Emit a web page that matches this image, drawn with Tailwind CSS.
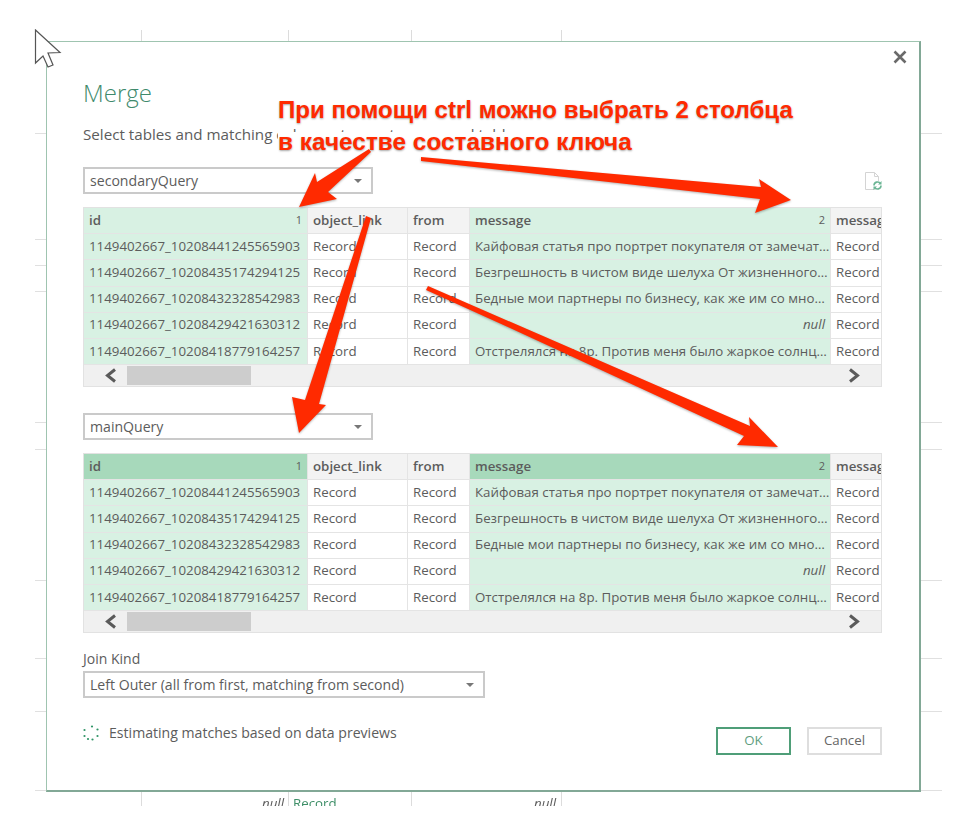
<!DOCTYPE html>
<html lang="en">

<head>
    <meta charset="UTF-8">
    <title>Merge</title>
    <script src="https://cdn.jsdelivr.net/npm/@tailwindcss/browser@4"></script>
</head>

<body class="bg-white font-['Open_Sans',sans-serif] text-[#5c5c5c]">
    <div class="relative w-[968px] h-[836px] overflow-hidden blur-[0.5px]">

        <!-- Sheet behind the dialog -->
        <div class="absolute left-[35px] top-[30px] w-[907px] h-[776px] overflow-hidden">
            <div class="absolute left-[106px] top-0 w-px h-full bg-[#dcdcdc]"></div>
            <div class="absolute left-[253px] top-0 w-px h-full bg-[#dcdcdc]"></div>
            <div class="absolute left-[376px] top-0 w-px h-full bg-[#dcdcdc]"></div>
            <div class="absolute left-[526px] top-0 w-px h-full bg-[#dcdcdc]"></div>
            <div class="absolute left-0 top-[103px] w-full h-px bg-[#e0e0e0]"></div>
            <div class="absolute left-0 top-[209px] w-full h-px bg-[#e0e0e0]"></div>
            <div class="absolute left-0 top-[235px] w-full h-px bg-[#e0e0e0]"></div>
            <div class="absolute left-0 top-[261px] w-full h-px bg-[#e0e0e0]"></div>
            <div class="absolute left-0 top-[392px] w-full h-px bg-[#e0e0e0]"></div>
            <div class="absolute left-0 top-[419px] w-full h-px bg-[#e0e0e0]"></div>
            <div class="absolute left-0 top-[550px] w-full h-px bg-[#e0e0e0]"></div>
            <div class="absolute left-0 top-[628px] w-full h-px bg-[#e0e0e0]"></div>
            <div class="absolute left-0 top-[681px] w-full h-px bg-[#e0e0e0]"></div>
            <div class="absolute left-0 top-[760px] w-full h-px bg-[#e0e0e0]"></div>
            <span class="absolute left-[227px] top-[764px] text-[13.3px] italic">null</span>
            <span class="absolute left-[258px] top-[764px] text-[13.3px] text-[#3f8f68]">Record</span>
            <span class="absolute left-[499px] top-[764px] text-[13.3px] italic">null</span>
        </div>

        <!-- Merge dialog -->
        <div class="relative ml-[46px] mt-[41px] w-[875px] h-[751px] bg-white border border-[#9fc4b0] border-r-2 border-b-2 border-r-[#82a896] border-b-[#82a896] pl-[36px] pr-[37px]">
            <button class="absolute right-[12px] top-[8px]">
                <svg width="14" height="14" viewBox="0 0 14 14" fill="none" stroke="#6a6a6a" stroke-width="2.6">
                    <path d="M1.5 1.5 12.5 12.5M12.5 1.5 1.5 12.5" />
                </svg>
            </button>

            <h1 class="pt-[33px] h-[72px] text-[24px] leading-[36px] font-light text-[#3f8a6c]">Merge</h1>
            <p class="mt-[10px] h-[20px] text-[15.2px] leading-[20px]">Select tables and matching columns to create a merged table</p>

            <div class="mt-[23px] flex items-end justify-between h-[27px]">
                <div class="w-[290px] h-[27px] border-2 border-[#cacaca] flex items-center justify-between pl-[5px] pr-[9px] text-[14.1px]">
                    <span>secondaryQuery</span>
                    <span class="w-0 h-0 border-x-[4px] border-x-transparent border-t-[4px] border-t-[#777]"></span>
                </div>
                <svg class="mb-[4px]" width="17" height="19" viewBox="0 0 17 19" fill="none">
                    <path d="M.5 1.500H9.500L13.500 5.500V18.500H.5Z" stroke="#d4d4d4" />
                    <path d="M9.500 1.500V5.500H13.500" stroke="#d4d4d4" />
                    <circle cx="12.500" cy="14.500" r="4.500" fill="#fff" />
                    <path d="M9 14.500A3.500 3.500 0 0 1 15.500 12.700M16 14.500A3.500 3.500 0 0 1 9.500 16.300" stroke="#6bb594" stroke-width="1.600" />
                    <path d="M16.500 10V13.500H13ZM8.500 19V15.500H12Z" fill="#6bb594" />
                </svg>
            </div>

            <!-- Upper preview table -->
            <div class="mt-[13px] w-[799px] h-[180px] border border-[#e2e2e2] bg-[#e4e4e4] text-[13.3px]">
                <div class="grid grid-cols-[223px_99px_61px_360px_50px] grid-rows-[25px_repeat(5,25.25px)] gap-px *:flex *:items-center *:px-[5px] *:whitespace-nowrap *:overflow-hidden">
                    <div class="bg-[#d8f1e3] font-semibold justify-between"><span>id</span><span class="text-[11px] font-normal">1</span></div>
                    <div class="bg-[#f3f3f3] font-semibold">object_link</div>
                    <div class="bg-[#f3f3f3] font-semibold">from</div>
                    <div class="bg-[#d8f1e3] font-semibold justify-between"><span>message</span><span class="text-[11px] font-normal">2</span></div>
                    <div class="bg-[#f3f3f3] font-semibold">messag</div>

                    <div class="bg-[#d8f1e3]">1149402667_10208441245565903</div>
                    <div class="bg-white">Record</div>
                    <div class="bg-white">Record</div>
                    <div class="bg-[#d8f1e3]">Кайфовая статья про портрет покупателя от замечат…</div>
                    <div class="bg-white">Record</div>

                    <div class="bg-[#d8f1e3]">1149402667_10208435174294125</div>
                    <div class="bg-white">Record</div>
                    <div class="bg-white">Record</div>
                    <div class="bg-[#d8f1e3]">Безгрешность в чистом виде шелуха От жизненного…</div>
                    <div class="bg-white">Record</div>

                    <div class="bg-[#d8f1e3]">1149402667_10208432328542983</div>
                    <div class="bg-white">Record</div>
                    <div class="bg-white">Record</div>
                    <div class="bg-[#d8f1e3]">Бедные мои партнеры по бизнесу, как же им со мно…</div>
                    <div class="bg-white">Record</div>

                    <div class="bg-[#d8f1e3]">1149402667_10208429421630312</div>
                    <div class="bg-white">Record</div>
                    <div class="bg-white">Record</div>
                    <div class="bg-[#d8f1e3] justify-end italic">null</div>
                    <div class="bg-white">Record</div>

                    <div class="bg-[#d8f1e3]">1149402667_10208418779164257</div>
                    <div class="bg-white">Record</div>
                    <div class="bg-white">Record</div>
                    <div class="bg-[#d8f1e3]">Отстрелялся на 8р. Против меня было жаркое солнц…</div>
                    <div class="bg-white">Record</div>
                </div>
                <div class="mt-px h-[21px] bg-[#f0f0f0] flex items-center pl-[20px] pr-[20px]">
                    <svg width="13" height="15" viewBox="0 0 13 15" fill="none" stroke="#5a5a5a" stroke-width="3"><path d="M11 1.500 3.500 7.500l7.500 6" /></svg>
                    <div class="ml-[10px] w-[124px] h-[19px] bg-[#cdcdcd]"></div>
                    <svg class="ml-auto" width="13" height="15" viewBox="0 0 13 15" fill="none" stroke="#5a5a5a" stroke-width="3"><path d="M2 1.500l7.500 6-7.500 6" /></svg>
                </div>
            </div>

            <div class="mt-[26px] w-[290px] h-[27px] border-2 border-[#cacaca] flex items-center justify-between pl-[5px] pr-[9px] text-[14.1px]">
                <span>mainQuery</span>
                <span class="w-0 h-0 border-x-[4px] border-x-transparent border-t-[4px] border-t-[#777]"></span>
            </div>

            <!-- Lower preview table -->
            <div class="mt-[13px] w-[799px] h-[180px] border border-[#e2e2e2] bg-[#e4e4e4] text-[13.3px]">
                <div class="grid grid-cols-[223px_99px_61px_360px_50px] grid-rows-[25px_repeat(5,25.25px)] gap-px *:flex *:items-center *:px-[5px] *:whitespace-nowrap *:overflow-hidden">
                    <div class="bg-[#a7d9bb] font-semibold justify-between"><span>id</span><span class="text-[11px] font-normal">1</span></div>
                    <div class="bg-[#f3f3f3] font-semibold">object_link</div>
                    <div class="bg-[#f3f3f3] font-semibold">from</div>
                    <div class="bg-[#a7d9bb] font-semibold justify-between"><span>message</span><span class="text-[11px] font-normal">2</span></div>
                    <div class="bg-[#f3f3f3] font-semibold">messag</div>

                    <div class="bg-[#d8f1e3]">1149402667_10208441245565903</div>
                    <div class="bg-white">Record</div>
                    <div class="bg-white">Record</div>
                    <div class="bg-[#d8f1e3]">Кайфовая статья про портрет покупателя от замечат…</div>
                    <div class="bg-white">Record</div>

                    <div class="bg-[#d8f1e3]">1149402667_10208435174294125</div>
                    <div class="bg-white">Record</div>
                    <div class="bg-white">Record</div>
                    <div class="bg-[#d8f1e3]">Безгрешность в чистом виде шелуха От жизненного…</div>
                    <div class="bg-white">Record</div>

                    <div class="bg-[#d8f1e3]">1149402667_10208432328542983</div>
                    <div class="bg-white">Record</div>
                    <div class="bg-white">Record</div>
                    <div class="bg-[#d8f1e3]">Бедные мои партнеры по бизнесу, как же им со мно…</div>
                    <div class="bg-white">Record</div>

                    <div class="bg-[#d8f1e3]">1149402667_10208429421630312</div>
                    <div class="bg-white">Record</div>
                    <div class="bg-white">Record</div>
                    <div class="bg-[#d8f1e3] justify-end italic">null</div>
                    <div class="bg-white">Record</div>

                    <div class="bg-[#d8f1e3]">1149402667_10208418779164257</div>
                    <div class="bg-white">Record</div>
                    <div class="bg-white">Record</div>
                    <div class="bg-[#d8f1e3]">Отстрелялся на 8р. Против меня было жаркое солнц…</div>
                    <div class="bg-white">Record</div>
                </div>
                <div class="mt-px h-[21px] bg-[#f0f0f0] flex items-center pl-[20px] pr-[20px]">
                    <svg width="13" height="15" viewBox="0 0 13 15" fill="none" stroke="#5a5a5a" stroke-width="3"><path d="M11 1.500 3.500 7.500l7.500 6" /></svg>
                    <div class="ml-[10px] w-[124px] h-[19px] bg-[#cdcdcd]"></div>
                    <svg class="ml-auto" width="13" height="15" viewBox="0 0 13 15" fill="none" stroke="#5a5a5a" stroke-width="3"><path d="M2 1.500l7.500 6-7.500 6" /></svg>
                </div>
            </div>

            <p class="mt-[16px] h-[20px] text-[14px] leading-[20px]">Join Kind</p>
            <div class="mt-[2px] w-[402px] h-[27px] border-2 border-[#cacaca] flex items-center justify-between pl-[5px] pr-[9px] text-[14.1px]">
                <span>Left Outer (all from first, matching from second)</span>
                <span class="w-0 h-0 border-x-[4px] border-x-transparent border-t-[4px] border-t-[#777]"></span>
            </div>

            <div class="mt-[25px] flex items-start justify-between">
                <div class="flex items-center gap-[10px] h-[20px]">
                    <svg width="16" height="16" viewBox="0 0 16 16" fill="#2f9466">
                        <circle cx="9" cy="1.500" r="1.100" />
                        <circle cx="14.500" cy="4.500" r="1.100" />
                        <circle cx="14.500" cy="11" r="1.100" />
                        <circle cx="9.500" cy="14.500" r="1.100" />
                        <circle cx="5" cy="14" r="1.100" />
                        <circle cx="1.500" cy="11" r="1.100" />
                        <circle cx="1.500" cy="5" r="1.100" />
                    </svg>
                    <span class="text-[14.1px] leading-[20px]">Estimating matches based on data previews</span>
                </div>
                <div class="flex gap-[16px] pt-[4px]">
                    <button class="w-[75px] h-[28px] border-2 border-[#4f9e78] text-[13.3px] text-[#5f9e7f]">OK</button>
                    <button class="w-[75px] h-[28px] border-2 border-[#dedede] text-[13.3px] text-[#666]">Cancel</button>
                </div>
            </div>
        </div>

        <!-- Mouse pointer -->
        <svg class="absolute left-[33px] top-[28px]" width="30" height="42" viewBox="0 0 30 42" fill="#fff" stroke="#555" stroke-width="1.200">
            <path d="M2.500 2 27 24.500 15 25 20 37 15 39 10 28 2.500 35Z" />
        </svg>

        <!-- Annotation text, the second line sits on a white box that hides the lower half of the subtitle -->
        <div class="absolute left-[278px] top-[94px] font-['Liberation_Sans',sans-serif] font-bold text-[#ff2a00] [text-shadow:0_1px_2px_rgba(0,0,0,0.35)] whitespace-nowrap">
            <p class="text-[24.1px] leading-[32px]">При помощи ctrl можно выбрать 2 столбца</p>
            <p class="mt-[6px] w-fit text-[24.4px] leading-[20px] bg-white">в качестве составного ключа</p>
        </div>

        <!-- Red annotation arrows -->
        <svg class="absolute left-0 top-0 drop-shadow-[0_1px_1px_rgba(0,0,0,0.3)]" width="968" height="836" viewBox="0 0 968 836" fill="#ff2a00">
            <path d="M369 149 317 182 315 173 299 207 337 199 328 192 371 152Z" />
            <path d="M421 157 761 187 759 179 791 200 755 213 760 199 421 161Z" />
            <path d="M366 216 371 218 319 404 326 405 299 433 292 397 305 400Z" />
            <path d="M428 286 750 426 749 417 778 447 737 445 744 436 510 328 426 290Z" />
        </svg>
    </div>
</body>

</html>
